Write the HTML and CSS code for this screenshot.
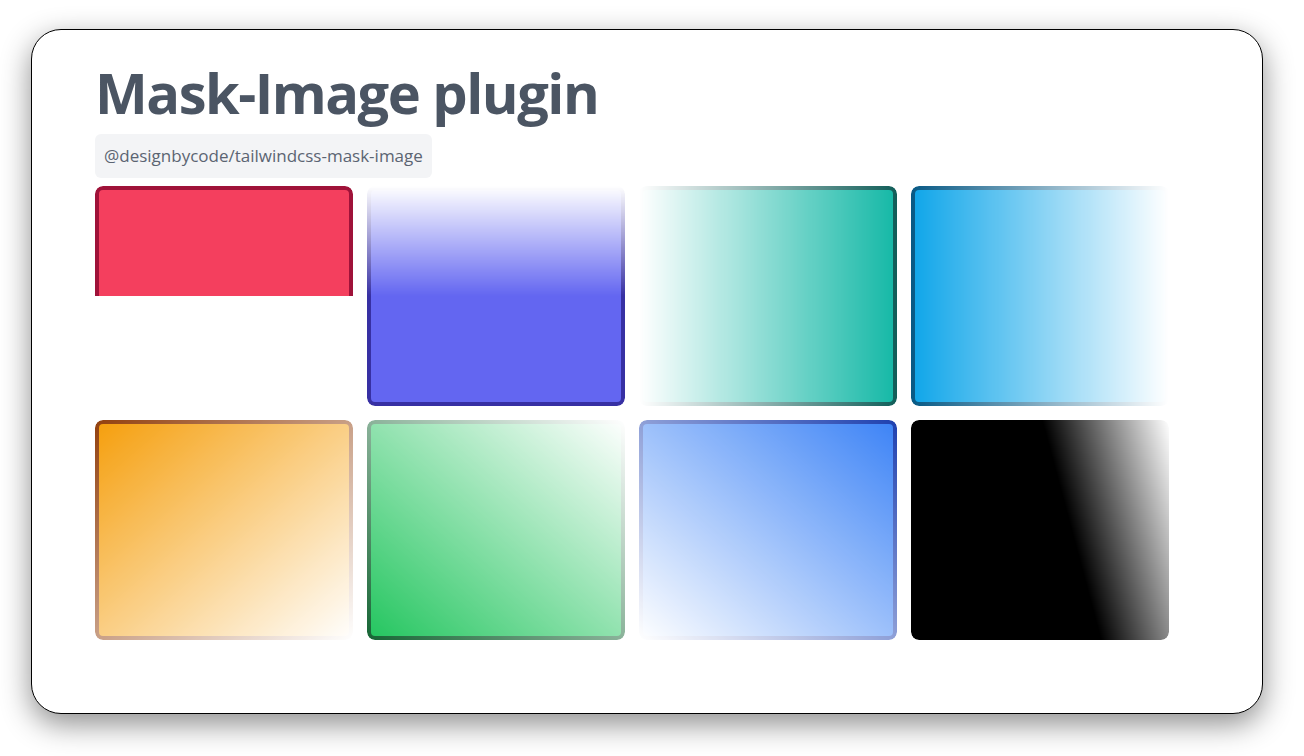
FILE: index.html
```html
<!DOCTYPE html>
<html lang="en">
<head>
<meta charset="utf-8">
<title>Mask-Image plugin</title>
<link rel="stylesheet" href="styles.css">
</head>
<body>
<main class="frame">
  <header class="head">
    <h1 class="title">Mask-Image plugin</h1>
    <code class="pkg">@designbycode/tailwindcss-mask-image</code>
  </header>
  <section class="grid">
    <div class="tile tile-rose mask-half"></div>
    <div class="tile tile-indigo mask-top"></div>
    <div class="tile tile-teal mask-left"></div>
    <div class="tile tile-sky mask-right"></div>
    <div class="tile tile-amber mask-br"></div>
    <div class="tile tile-green mask-tr"></div>
    <div class="tile tile-blue mask-bl"></div>
    <div class="tile tile-black mask-angle"></div>
  </section>
</main>
</body>
</html>
```

FILE: styles.css
```css
html, body {
  margin: 0;
  background: #ffffff;
}

body {
  padding: 29px 41px 42px 31px;
  height: 756px;
  box-sizing: border-box;
  font-family: "Open Sans", "Noto Sans", "Liberation Sans", sans-serif;
}

.frame {
  height: 100%;
  box-sizing: border-box;
  border: 1px solid #000;
  border-radius: 30px;
  background: #fff;
  box-shadow: 0 10px 30px rgba(0, 0, 0, 0.45);
  padding: 28px 63px 0 63px;
  display: flex;
  flex-direction: column;
}

.head {
  display: flex;
  flex-direction: column;
  align-items: flex-start;
  gap: 8px;
}

.title {
  margin: 0;
  font-size: 56px;
  line-height: 68px;
  font-weight: 700;
  color: #4b5563;
  letter-spacing: -1.5px;
}

.pkg {
  display: block;
  background: #f3f4f6;
  border-radius: 6px;
  padding: 10px 9px;
  font-family: "Open Sans", "Noto Sans", sans-serif;
  font-size: 17px;
  line-height: 24px;
  color: #5b6472;
}

.grid {
  margin-top: 8px;
  display: grid;
  grid-template-columns: repeat(4, 258px);
  grid-auto-rows: 220px;
  gap: 14px;
}

.tile {
  box-sizing: border-box;
  border: 4px solid;
  border-radius: 8px;
}

.tile-rose   { background: #f43f5e; border-color: #9f1239; }
.tile-indigo { background: #6366f1; border-color: #3730a3; }
.tile-teal   { background: #14b8a6; border-color: #115e59; }
.tile-sky    { background: #0ea5e9; border-color: #075985; }
.tile-amber  { background: #f59e0b; border-color: #92400e; }
.tile-green  { background: #22c55e; border-color: #166534; }
.tile-blue   { background: #3b82f6; border-color: #1e40af; }
.tile-black  { background: #000000; border-color: #000000; }

.mask-half {
  -webkit-mask-image: linear-gradient(to bottom, #000 50%, transparent 50%);
  mask-image: linear-gradient(to bottom, #000 50%, transparent 50%);
}
.mask-top {
  -webkit-mask-image: linear-gradient(to bottom, transparent, #000 50%);
  mask-image: linear-gradient(to bottom, transparent, #000 50%);
}
.mask-left {
  -webkit-mask-image: linear-gradient(to right, transparent, #000);
  mask-image: linear-gradient(to right, transparent, #000);
}
.mask-right {
  -webkit-mask-image: linear-gradient(to right, #000, transparent);
  mask-image: linear-gradient(to right, #000, transparent);
}
.mask-br {
  -webkit-mask-image: linear-gradient(to bottom right, #000, transparent);
  mask-image: linear-gradient(to bottom right, #000, transparent);
}
.mask-tr {
  -webkit-mask-image: linear-gradient(to top right, #000, transparent);
  mask-image: linear-gradient(to top right, #000, transparent);
}
.mask-bl {
  -webkit-mask-image: linear-gradient(to bottom left, #000, transparent);
  mask-image: linear-gradient(to bottom left, #000, transparent);
}
.mask-angle {
  -webkit-mask-image: linear-gradient(75deg, #000 60%, transparent);
  mask-image: linear-gradient(75deg, #000 60%, transparent);
}
```
